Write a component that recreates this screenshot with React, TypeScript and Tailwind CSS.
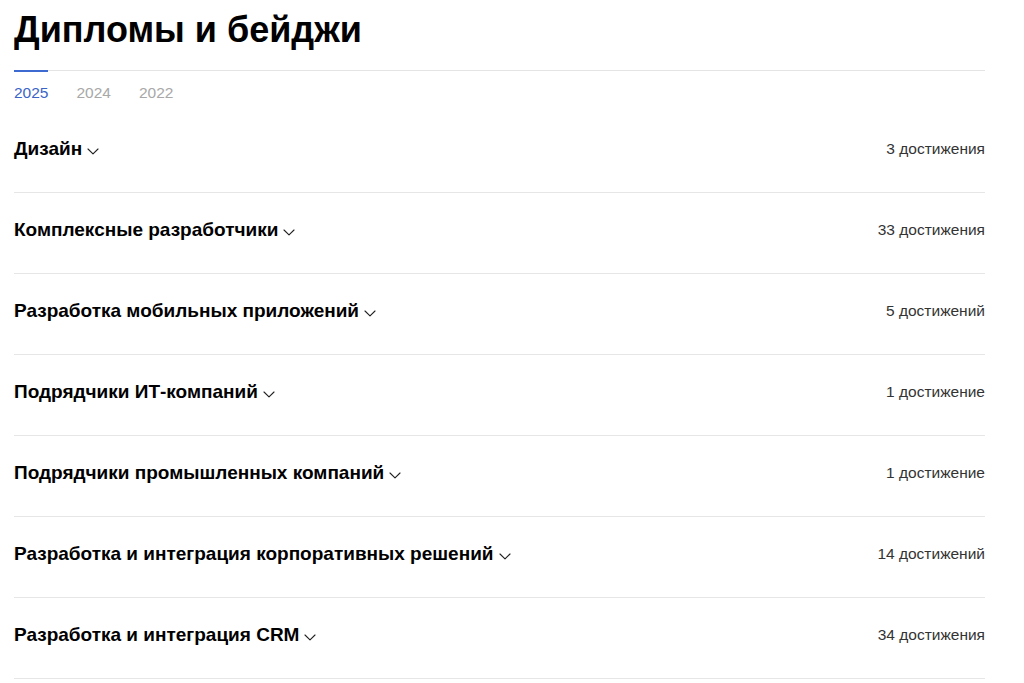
const years = ["2025", "2024", "2022"];

const groups = [
  { title: "Дизайн", count: "3 достижения" },
  { title: "Комплексные разработчики", count: "33 достижения" },
  { title: "Разработка мобильных приложений", count: "5 достижений" },
  { title: "Подрядчики ИТ-компаний", count: "1 достижение" },
  { title: "Подрядчики промышленных компаний", count: "1 достижение" },
  { title: "Разработка и интеграция корпоративных решений", count: "14 достижений" },
  { title: "Разработка и интеграция CRM", count: "34 достижения" },
];

function Chevron() {
  return (
    <svg width="12" height="7" viewBox="0 0 12 7" fill="none" className="ml-[5px] mt-[5px] shrink-0">
      <path d="M1 1l5 4.8L11 1" stroke="#222" strokeWidth="1.15" strokeLinecap="round" strokeLinejoin="round" />
    </svg>
  );
}

export default function App() {
  return (
    <div className="min-h-[683px] bg-white font-['Liberation_Sans',Arial,sans-serif] text-black">
      <div className="w-[985px] pl-[14px] pt-[10px]">
        <h1 className="text-[36px] font-bold leading-[40px]">Дипломы и бейджи</h1>

        <div className="mt-[20px] flex gap-[28px] border-t border-[#e4e4e4]">
          {years.map((y, i) => (
            <button
              key={y}
              className={`-mt-px border-t-2 pt-[11px] text-[15.5px] leading-[20px] ${
                i === 0 ? "border-[#3d6ad0] text-[#3a64c8]" : "border-transparent text-[#a8a8a8]"
              }`}
            >
              {y}
            </button>
          ))}
        </div>

        <div className="mt-[9px]">
          {groups.map((g) => (
            <div
              key={g.title}
              className="flex items-center justify-between border-b border-[#e6e6e6] pb-[31px] pt-[25px]"
            >
              <div className="flex items-center">
                <span className="text-[19px] font-bold leading-[24px]">{g.title}</span>
                <Chevron />
              </div>
              <span className="text-[15.5px] leading-[20px] text-[#333]">{g.count}</span>
            </div>
          ))}
        </div>
      </div>
    </div>
  );
}
